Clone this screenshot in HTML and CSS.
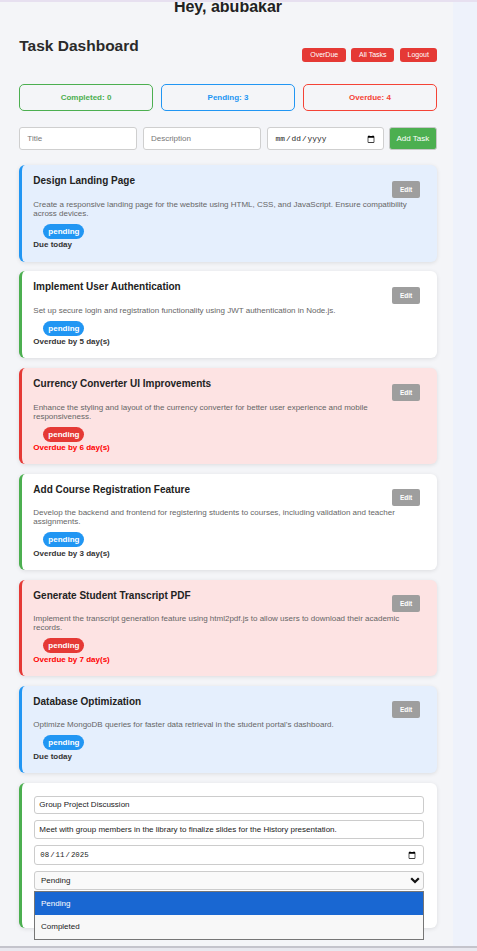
FILE: index.html
```html
<!DOCTYPE html>
<html lang="en">
<head>
<meta charset="utf-8">
<title>Task Dashboard</title>
<link rel="stylesheet" href="styles.css">
</head>
<body>
<div class="wrap">
  <main class="page">
    <h2 class="greet">Hey, abubakar</h2>
    <header class="head">
      <h1 class="title">Task Dashboard</h1>
      <nav class="nav">
        <button class="nav-btn">OverDue</button>
        <button class="nav-btn">All Tasks</button>
        <button class="nav-btn">Logout</button>
      </nav>
    </header>

    <section class="stats">
      <div class="stat stat-done">Completed: 0</div>
      <div class="stat stat-pending">Pending: 3</div>
      <div class="stat stat-over">Overdue: 4</div>
    </section>

    <form class="add-row">
      <input class="field" type="text" placeholder="Title">
      <input class="field" type="text" placeholder="Description">
      <input class="field field-date" type="date">
      <button class="add-btn" type="button">Add Task</button>
    </form>

    <section class="list">
      <article class="card card-today">
        <div class="card-head">
          <h3 class="card-title">Design Landing Page</h3>
          <button class="edit-btn">Edit</button>
        </div>
        <p class="desc">Create a responsive landing page for the website using HTML, CSS, and JavaScript. Ensure compatibility across devices.</p>
        <span class="badge badge-blue">pending</span>
        <div class="due">Due today</div>
      </article>

      <article class="card card-ok">
        <div class="card-head">
          <h3 class="card-title">Implement User Authentication</h3>
          <button class="edit-btn">Edit</button>
        </div>
        <p class="desc">Set up secure login and registration functionality using JWT authentication in Node.js.</p>
        <span class="badge badge-blue">pending</span>
        <div class="due">Overdue by 5 day(s)</div>
      </article>

      <article class="card card-late">
        <div class="card-head">
          <h3 class="card-title">Currency Converter UI Improvements</h3>
          <button class="edit-btn">Edit</button>
        </div>
        <p class="desc">Enhance the styling and layout of the currency converter for better user experience and mobile responsiveness.</p>
        <span class="badge badge-red">pending</span>
        <div class="due due-red">Overdue by 6 day(s)</div>
      </article>

      <article class="card card-ok">
        <div class="card-head">
          <h3 class="card-title">Add Course Registration Feature</h3>
          <button class="edit-btn">Edit</button>
        </div>
        <p class="desc">Develop the backend and frontend for registering students to courses, including validation and teacher assignments.</p>
        <span class="badge badge-blue">pending</span>
        <div class="due">Overdue by 3 day(s)</div>
      </article>

      <article class="card card-late">
        <div class="card-head">
          <h3 class="card-title">Generate Student Transcript PDF</h3>
          <button class="edit-btn">Edit</button>
        </div>
        <p class="desc">Implement the transcript generation feature using html2pdf.js to allow users to download their academic records.</p>
        <span class="badge badge-red">pending</span>
        <div class="due due-red">Overdue by 7 day(s)</div>
      </article>

      <article class="card card-today">
        <div class="card-head">
          <h3 class="card-title">Database Optimization</h3>
          <button class="edit-btn">Edit</button>
        </div>
        <p class="desc">Optimize MongoDB queries for faster data retrieval in the student portal’s dashboard.</p>
        <span class="badge badge-blue">pending</span>
        <div class="due">Due today</div>
      </article>

      <article class="card card-ok card-edit">
        <input class="efield" type="text" value="Group Project Discussion">
        <input class="efield" type="text" value="Meet with group members in the library to finalize slides for the History presentation.">
        <input class="efield efield-date" type="date" value="2025-08-11">
        <div class="select-wrap">
          <select class="eselect">
            <option selected>Pending</option>
            <option>Completed</option>
          </select>
          <svg class="chev" width="10" height="7" viewBox="0 0 10 7"><polyline points="1.2,1.2 5,5 8.8,1.2" fill="none" stroke="#111" stroke-width="2.2"/></svg>
          <ul class="menu">
            <li class="menu-item menu-active">Pending</li>
            <li class="menu-item">Completed</li>
          </ul>
        </div>
      </article>
    </section>
  </main>
</div>
<div class="bottom-bar"></div>
</body>
</html>
```

FILE: styles.css
```css
* { box-sizing: border-box; }

html, body {
  margin: 0;
  padding: 0;
}

body {
  background: #eef2fb;
  border-top: 2px solid #e7e0f0;
  font-family: "Liberation Sans", Arial, sans-serif;
  color: #222;
}

.wrap {
  display: flex;
}

.page {
  width: 453px;
  background: #f4f5f8;
  padding: 0 16.3px 17.7px 19.3px;
}

.greet {
  margin: 0;
  font-size: 16px;
  line-height: 10px;
  height: 10px;
  font-weight: bold;
  text-align: center;
  color: #222;
}

.head {
  margin-top: 24.6px;
  display: flex;
  justify-content: space-between;
  align-items: flex-start;
}

.title {
  margin: 0;
  font-size: 15.5px;
  line-height: 17.8px;
  font-weight: bold;
  color: #2a2a2a;
}

.nav {
  margin-top: 11.7px;
  display: flex;
  gap: 5.3px;
}

.nav-btn {
  height: 14px;
  padding: 0 7.8px;
  border: 0;
  border-radius: 3px;
  background: #e53935;
  color: #fff;
  font-family: inherit;
  font-size: 7px;
  line-height: 14px;
}

.stats {
  margin-top: 21.7px;
  display: grid;
  grid-template-columns: 1fr 1fr 1fr;
  gap: 8.6px;
}

.stat {
  height: 26.7px;
  border: 1px solid;
  border-radius: 5px;
  display: flex;
  align-items: center;
  justify-content: center;
  font-size: 8px;
  font-weight: bold;
}

.stat-done { border-color: #4caf50; color: #4caf50; }
.stat-pending { border-color: #2196f3; color: #2196f3; }
.stat-over { border-color: #f44336; color: #f44336; }

.add-row {
  margin: 16.6px 0 0;
  display: flex;
  gap: 5.6px;
  height: 23px;
}

.field {
  flex: 1;
  min-width: 0;
  height: 23px;
  border: 1px solid #cfcfcf;
  border-radius: 3px;
  background: #fff;
  padding: 0 7px;
  font-family: inherit;
  font-size: 8px;
  color: #333;
}

.field::placeholder { color: #777; }

.field-date {
  font-family: "Liberation Mono", "DejaVu Sans Mono", monospace;
  font-size: 7.8px;
  color: #222;
  padding: 0 6px 0 7px;
}

.add-btn {
  width: 47.6px;
  height: 23px;
  border: 1px solid #c8c8c8;
  border-radius: 3px;
  background: #4caf50;
  color: #fff;
  font-family: inherit;
  font-size: 8px;
  padding: 0;
}

.list {
  margin-top: 15px;
  display: flex;
  flex-direction: column;
  gap: 9.6px;
}

.card {
  display: flex;
  flex-direction: column;
  align-items: stretch;
  border-left: 3px solid;
  border-radius: 6px;
  padding: 10px 16.7px 12px 11px;
  box-shadow: 0 1px 4px rgba(0, 0, 0, 0.1);
}

.card-today { background: #e5effd; border-left-color: #2196f3; }
.card-ok { background: #fff; border-left-color: #4caf50; }
.card-late { background: #fde3e3; border-left-color: #e53935; }

.card-head {
  display: flex;
  justify-content: space-between;
  align-items: flex-start;
}

.card-title {
  margin: 0;
  font-size: 10px;
  line-height: 11.5px;
  font-weight: bold;
  color: #222;
}

.edit-btn {
  margin-top: 5.5px;
  width: 28px;
  height: 17px;
  padding: 0;
  border: 0;
  border-radius: 2px;
  background: #9e9e9e;
  color: #fff;
  font-family: inherit;
  font-size: 6.5px;
  font-weight: bold;
}

.desc {
  margin: 2px 0 6px;
  font-size: 8px;
  line-height: 9px;
  color: #666;
}

.badge {
  align-self: flex-start;
  margin-left: 10px;
  height: 15px;
  padding: 0 5px;
  border-radius: 8px;
  color: #fff;
  font-size: 8px;
  font-weight: bold;
  line-height: 15px;
}

.badge-blue { background: #2196f3; }
.badge-red { background: #e53935; }

.due {
  margin-top: 1.6px;
  font-size: 8px;
  line-height: 9.2px;
  font-weight: bold;
  color: #333;
}

.due-red { color: #f00; }

.card-edit {
  padding: 13px 13px 38.3px 11.7px;
}

.efield {
  display: block;
  width: 100%;
  height: 18.6px;
  margin: 0 0 6.2px;
  border: 1px solid #ccc;
  border-radius: 3px;
  background: #fff;
  padding: 0 4.3px;
  font-family: inherit;
  font-size: 8px;
  color: #1a1a1a;
}

.efield-date {
  height: 19.7px;
  font-family: "Liberation Mono", "DejaVu Sans Mono", monospace;
  font-size: 7.4px;
  padding: 0 5px 0 4.3px;
}

.select-wrap {
  position: relative;
  height: 18.7px;
}

.eselect {
  appearance: none;
  -webkit-appearance: none;
  display: block;
  width: 100%;
  height: 18.7px;
  border: 1px solid #ccc;
  border-radius: 3px;
  background: #f9f9f9;
  padding: 0 6px;
  font-family: inherit;
  font-size: 8px;
  color: #1a1a1a;
}

.chev {
  position: absolute;
  right: 4px;
  top: 6px;
  pointer-events: none;
}

.menu {
  position: absolute;
  left: 0;
  right: 0;
  top: 19.7px;
  margin: 0;
  padding: 0;
  list-style: none;
  border: 1px solid #767676;
  background: #f8f8f8;
  z-index: 5;
}

.menu-item {
  height: 23.7px;
  line-height: 23.7px;
  padding: 0 6px;
  font-size: 8px;
  color: #1a1a1a;
}

.menu-active {
  background: #1967d2;
  color: #fff;
}

.bottom-bar {
  border-top: 2px solid #c4c4cc;
  background: #e8e8ef;
  height: 12px;
}
```
